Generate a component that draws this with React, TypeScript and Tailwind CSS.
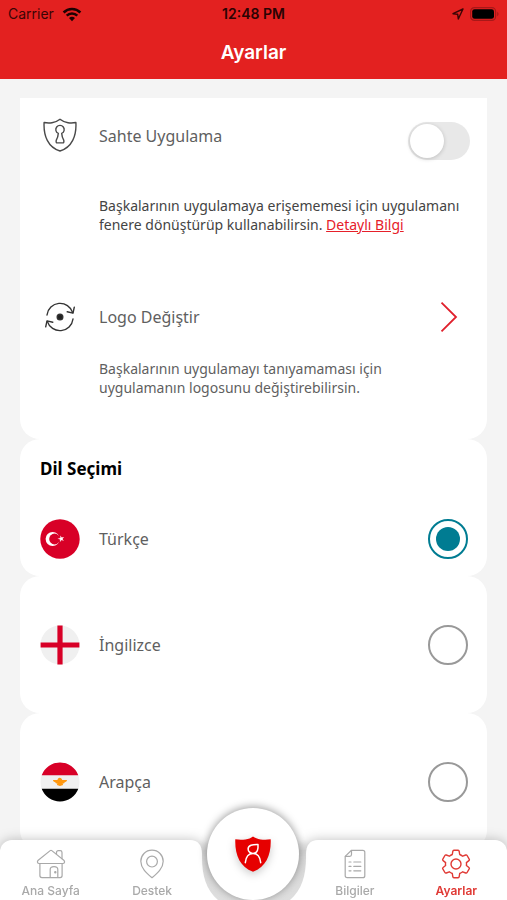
import { useState } from "react";
import type { ReactNode } from "react";

type Language = {
  code: string;
  name: string;
  flag: ReactNode;
};

const TurkeyFlag = () => (
  <svg viewBox="0 0 40 40" className="size-10" aria-hidden="true">
    <circle cx="20" cy="20" r="19.7" fill="#d80027" />
    <circle cx="12.6" cy="20" r="7" fill="#fff" />
    <circle cx="14.6" cy="20" r="5.4" fill="#d80027" />
    <path
      d="M20.400 16.600l1.300 2 2.300-.6-1.500 1.900 1.400 2-2.300-.8-1.500 1.900.1-2.400-2.700-.800 2.800-.7z"
      fill="#fff"
    />
  </svg>
);

const EnglandFlag = () => (
  <svg viewBox="0 0 40 40" className="size-10" aria-hidden="true">
    <circle cx="20" cy="20" r="19.5" fill="#f0f0f0" />
    <path
      d="M17.4.6h5.2v16.8h16.8v5.2H22.6v16.8h-5.2V22.6H.6v-5.2h16.8z"
      fill="#d80027"
    />
  </svg>
);

const EgyptFlag = () => (
  <svg viewBox="0 0 40 40" className="size-10" aria-hidden="true">
    <circle cx="20" cy="20" r="19.5" fill="#f0f0f0" />
    <path d="M20 .5A19.5 19.5 0 0 0 1.7 13.2h36.6A19.5 19.5 0 0 0 20 .5z" fill="#d80027" />
    <path d="M20 39.5A19.5 19.5 0 0 1 1.7 26.8h36.6A19.5 19.5 0 0 1 20 39.5z" fill="#000" />
    <path
      d="M13 18h4.500c.2-1.200 1-2.200 2-2.200 1.200 0 2.200.8 2.700 2.200H27c0 1.400-1.200 2.200-2.400 2.200 0 1-1 1.400-2 1.400l.5 1.500-3.100.8-3.100-.8.500-1.500c-1 0-2-.4-2-1.400-1.200 0-2.400-.8-2.400-2.200z"
      fill="#ff9811"
    />
  </svg>
);

const ShieldIcon = () => (
  <svg viewBox="0 0 34 34" className="size-[34px]" fill="none" stroke="#4a4a4a" strokeWidth="1.4" strokeLinejoin="round" aria-hidden="true">
    <path d="M17 1.200c-2 1.600-4.800 3-8 3.500-2.700.4-5.300.3-7.900-.2C.4 17.800 5 29.300 17 33 29 29.300 33.600 17.800 32.900 4.500c-2.600.5-5.200.6-7.900.2-3.200-.5-6-1.900-8-3.500z" />
    <path d="M15.300 15.400a4.200 4.200 0 1 1 3.400 0c.2 2.600.8 4.700 1.900 6.500.5.900.3 2.700-.3 3h-6.600c-.6-.3-.8-2.100-.3-3 1.100-1.800 1.700-3.900 1.900-6.500z" />
  </svg>
);

const SwapIcon = () => (
  <svg viewBox="0 0 32 32" className="size-8" fill="none" stroke="#333" strokeWidth="1.400" strokeLinecap="round" strokeLinejoin="round" aria-hidden="true">
    <path d="M3 14A13.200 13.200 0 0 1 28.700 11.600" />
    <path d="M23.200 10.800l5.800 1.300 1.300-6" />
    <path d="M29 18A13.200 13.200 0 0 1 3.300 20.400" />
    <path d="M8.800 21.200L3 19.900l-1.300 6" />
    <circle cx="16" cy="16" r="2.800" fill="#222" />
  </svg>
);

const HomeIcon = () => (
  <svg viewBox="0 0 30 30" className="size-[30px]" fill="none" stroke="currentColor" strokeWidth="1.200" strokeLinejoin="round" strokeLinecap="round" aria-hidden="true">
    <path d="M14.200 1.600c.5-.4 1.100-.4 1.600 0l12 9.600c1.400 1.200.8 3.300-1 3.300H3.200c-1.800 0-2.400-2.100-1-3.300z" />
    <path d="M20.500 5.200V3.400c0-1.100.7-1.800 1.800-1.800h1.900c1.100 0 1.800.7 1.800 1.800v6.200" />
    <path d="M3.900 14.600v12c0 1.300.7 2 2 2h18.200c1.300 0 2-.7 2-2v-12" />
    <path d="M14.200 28.500v-7.900c0-1.600 1.700-2.900 3.800-2.900s3.800 1.300 3.800 2.900v7.900" />
    <circle cx="19.300" cy="23.200" r=".6" fill="currentColor" />
  </svg>
);

const PinIcon = () => (
  <svg viewBox="0 0 30 30" className="size-[30px]" fill="none" stroke="currentColor" strokeWidth="1.200" strokeLinejoin="round" aria-hidden="true">
    <path d="M15 1.200C8.600 1.200 3.800 6.200 3.800 12.300c0 6.800 5.700 11.800 11.200 16.400 5.500-4.600 11.200-9.600 11.200-16.400C26.200 6.200 21.400 1.200 15 1.200z" />
    <circle cx="15" cy="12.600" r="5.400" />
  </svg>
);

const NotesIcon = () => (
  <svg viewBox="0 0 30 30" className="size-[30px]" fill="none" stroke="currentColor" strokeWidth="1.200" strokeLinejoin="round" strokeLinecap="round" aria-hidden="true">
    <path d="M11.500 1.300h11.300c1.400 0 2 .7 2 2v23.400c0 1.300-.6 2-2 2H7.200c-1.400 0-2-.7-2-2V7.400z" />
    <path d="M11.500 1.500v4.100c0 1.200-.6 1.800-1.800 1.800H5.400" />
    <path d="M9 13h2M13.800 13h7M9 17.400h2M13.800 17.400h7M9 21.800h2M13.800 21.800h7" />
  </svg>
);

const GearIcon = () => (
  <svg viewBox="0 0 30 30" className="size-[30px]" fill="none" stroke="currentColor" strokeWidth="1.400" strokeLinejoin="round" aria-hidden="true">
    <path d="M12.900 1.300h4.200c.6 0 1 .4 1.100 1l.5 3.200c1.100.4 2.100 1 3 1.700l3-1.200c.6-.2 1.100 0 1.400.5l2.100 3.700c.3.500.2 1.100-.3 1.400L25.400 13.600c.2 1 .2 1.900 0 2.900l2.500 2c.5.3.6.900.3 1.400l-2.100 3.600c-.3.500-.8.700-1.400.5l-3-1.200c-.9.700-1.900 1.300-3 1.700l-.5 3.200c-.1.600-.5 1-1.100 1h-4.200c-.6 0-1-.4-1.100-1l-.5-3.200c-1.100-.4-2.100-1-3-1.700l-3 1.200c-.6.2-1.100 0-1.400-.5l-2.100-3.600c-.3-.5-.2-1.100.3-1.400l2.500-2c-.2-1-.2-1.900 0-2.900l-2.500-2c-.5-.3-.6-.9-.3-1.400l2.100-3.700c.3-.5.8-.7 1.400-.5l3 1.200c.9-.7 1.900-1.300 3-1.700l.5-3.200c.1-.6.500-1 1.100-1z" />
    <circle cx="15" cy="15" r="5" />
  </svg>
);

const BadgeIcon = () => (
  <svg viewBox="0 0 36 36" className="size-9 drop-shadow-[0_3px_4px_rgba(0,0,0,0.2)]" aria-hidden="true">
    <path
      d="M18 .4c-2 1.400-4.500 2.600-7.600 3-3.400.5-6.600.4-10.100-.1C-.3 18 4.500 30.800 18 35.700 31.500 30.800 36.300 18 35.700 3.300c-3.500.5-6.700.6-10.100.1-3.100-.4-5.600-1.600-7.600-3z"
      fill="#e60000"
    />
    <path
      d="M23 8.500c.3 4.200-.2 8.900-5 8.900-2.700 0-4.900-1.900-4.900-4.500 0-3.900 4.500-4.500 9.900-4.400zM10.300 26.700c.6-5.600 3.400-9.100 7.700-9.100s7.100 3.500 7.700 9.100"
      fill="none"
      stroke="#fff"
      strokeWidth="1.500"
      strokeLinecap="round"
      strokeLinejoin="round"
    />
  </svg>
);

const languages: Language[] = [
  { code: "tr", name: "Türkçe", flag: <TurkeyFlag /> },
  { code: "en", name: "İngilizce", flag: <EnglandFlag /> },
  { code: "ar", name: "Arapça", flag: <EgyptFlag /> },
];

const StatusBar = () => (
  <div className="grid grid-cols-3 items-center h-7 px-2 text-sm text-[#3a0505]">
    <div className="flex items-center gap-2">
      <span>Carrier</span>
      <svg viewBox="0 0 20 15" className="w-5 h-[15px]" aria-hidden="true">
        <path d="M10 14.200l-3-3.100a4.300 4.300 0 0 1 6 0z" fill="#1c0202" />
        <path
          d="M4.700 8.700a7.600 7.600 0 0 1 10.600 0M1.600 5.500a12 12 0 0 1 16.800 0"
          fill="none"
          stroke="#1c0202"
          strokeWidth="2.500"
        />
      </svg>
    </div>
    <span className="text-center font-semibold whitespace-nowrap text-[#2a0303]">12:48 PM</span>
    <div className="flex items-center justify-end gap-1.5">
      <svg viewBox="0 0 12 12" className="size-3" aria-hidden="true">
        <path d="M11 1L1 5.700l4.700.6.600 4.700z" fill="none" stroke="#3a0505" strokeWidth="1.400" strokeLinejoin="round" />
      </svg>
      <svg viewBox="0 0 29 14" className="w-[29px] h-3.5" aria-hidden="true">
        <rect x=".6" y=".6" width="25" height="12.800" rx="3.800" fill="none" stroke="#a81818" strokeWidth="1.200" />
        <rect x="2.200" y="2.200" width="21.800" height="9.600" rx="2.400" fill="#000" />
        <path d="M27.200 4.800c1.800.8 1.800 3.600 0 4.400z" fill="#a81818" />
      </svg>
    </div>
  </div>
);

const LanguageRow = ({
  item,
  checked,
  onSelect,
}: {
  item: Language;
  checked: boolean;
  onSelect: (code: string) => void;
}) => (
  <label className="flex items-center cursor-pointer">
    {item.flag}
    <span className="ml-[19px] flex-1 text-base">{item.name}</span>
    <input
      type="radio"
      name="language"
      value={item.code}
      checked={checked}
      onChange={() => onSelect(item.code)}
      className="appearance-none size-10 rounded-full border-2 border-[#999999] bg-white grid place-items-center checked:border-[#007c92] checked:before:content-[''] checked:before:size-6 checked:before:rounded-full checked:before:bg-[#007c92]"
    />
  </label>
);

const tabClass = "flex flex-col items-center pt-[9px] text-xs font-medium";

const BottomNav = () => (
  <nav className="fixed inset-x-0 bottom-0 h-[60px] font-['Inter',sans-serif] text-[#a9a9a9]">
    {/* BACKGROUND WITH NOTCH */}
    <div className="absolute inset-0 flex drop-shadow-[0_0_6px_rgba(0,0,0,0.25)]">
      <div className="flex-1 bg-white rounded-tl-xl" />
      <svg viewBox="0 0 128 60" className="w-32 h-[60px]" aria-hidden="true">
        <defs>
          <linearGradient id="notch" x1="0" y1="0" x2="0" y2="1">
            <stop offset="0" stopColor="#d8d8d8" stopOpacity="0" />
            <stop offset="0.3" stopColor="#d8d8d8" />
            <stop offset="1" stopColor="#dedede" />
          </linearGradient>
        </defs>
        <path d="M0 0h128v60H0z" fill="url(#notch)" />
        <path d="M0 0c8 0 12 5 12 14v3c0 18 4 33 16 43H0z" fill="#fff" />
        <path d="M128 0c-8 0-12 5-12 14v3c0 18-4 33-16 43h28z" fill="#fff" />
      </svg>
      <div className="flex-1 bg-white rounded-tr-xl" />
    </div>
    {/* TABS */}
    <div className="relative grid grid-cols-5 h-full">
      <a href="#ana-sayfa" className={tabClass}>
        <HomeIcon />
        <span className="mt-1">Ana Sayfa</span>
      </a>
      <a href="#destek" className={tabClass}>
        <PinIcon />
        <span className="mt-1">Destek</span>
      </a>
      <div className="flex justify-center items-start">
        <button
          type="button"
          aria-label="Acil durum"
          className="shrink-0 -mt-8 flex items-center justify-center size-[92px] rounded-full bg-white shadow-[0_-1px_8px_rgba(0,0,0,0.4)]"
        >
          <BadgeIcon />
        </button>
      </div>
      <a href="#bilgiler" className={tabClass}>
        <NotesIcon />
        <span className="mt-1">Bilgiler</span>
      </a>
      <a href="#ayarlar" aria-current="page" className={`${tabClass} text-[#e03a35]`}>
        <GearIcon />
        <span className="mt-1 font-semibold">Ayarlar</span>
      </a>
    </div>
  </nav>
);

const App = () => {
  const [fakeApp, setFakeApp] = useState(false);
  const [language, setLanguage] = useState("tr");

  return (
    <div className="flex flex-col h-screen bg-[#f4f4f4] font-['Noto_Sans',sans-serif] text-[#5f5f5f]">
      {/* HEADER */}
      <header className="shrink-0 bg-[#e32120] font-['Inter',sans-serif] pb-3">
        <StatusBar />
        <h1 className="pt-[11px] text-center text-[19px] leading-7 font-semibold text-white">Ayarlar</h1>
      </header>

      {/* SETTINGS */}
      <main className="flex-1 overflow-y-auto [scrollbar-width:none] mt-[19px] px-5 pb-[60px]">
        <section className="bg-white rounded-b-[20px] h-[341px] pl-5 pr-[19px] pt-5">
          <div className="flex items-start">
            <div className="w-10 flex justify-center">
              <ShieldIcon />
            </div>
            <label htmlFor="fake-app" className="ml-[19px] flex-1 text-base leading-9">
              Sahte Uygulama
            </label>
            <input
              id="fake-app"
              type="checkbox"
              role="switch"
              checked={fakeApp}
              onChange={(e) => setFakeApp(e.target.checked)}
              className="appearance-none mt-1 -mr-0.5 flex items-center w-[62px] h-[38px] p-0.5 rounded-full bg-[#e8e8e8] checked:bg-[#007c92] checked:justify-end before:content-[''] before:size-[34px] before:rounded-full before:bg-white before:shadow-[0_1px_4px_rgba(0,0,0,0.18)]"
            />
          </div>
          <p className="mt-9 ml-[59px] text-sm leading-[19px] text-[#444444]">
            Başkalarının uygulamaya erişememesi için uygulamanı fenere dönüştürüp kullanabilirsin.{" "}
            <a href="#detayli-bilgi" className="inline-block text-[#e6202a] underline">
              Detaylı Bilgi
            </a>
          </p>

          <button type="button" className="mt-[65px] w-full flex items-center text-left">
            <span className="w-10 flex justify-center">
              <SwapIcon />
            </span>
            <span className="ml-[19px] flex-1 text-base leading-9">Logo Değiştir</span>
            <svg viewBox="0 0 18 32" className="w-[18px] h-8 mr-2.5" fill="none" stroke="#e0202c" strokeWidth="1.800" aria-hidden="true">
              <path d="M1.500 1.700L16 16 1.500 30.300" />
            </svg>
          </button>
          <p className="mt-6 ml-[59px] max-w-80 text-sm leading-[19px]">
            Başkalarının uygulamayı tanıyamaması için uygulamanın logosunu değiştirebilirsin.
          </p>
        </section>

        {/* LANGUAGES */}
        <section className="h-[137px] pl-5 pr-[19px] pt-[18px] bg-white rounded-[20px]">
          <h2 className="mb-[38px] text-[17px] leading-6 font-bold text-black">Dil Seçimi</h2>
          <LanguageRow
            item={languages[0]}
            checked={language === languages[0].code}
            onSelect={setLanguage}
          />
        </section>
        {languages.slice(1).map((item) => (
          <section
            key={item.code}
            className="flex flex-col justify-center h-[137px] pl-5 pr-[19px] bg-white rounded-[20px]"
          >
            <LanguageRow
              item={item}
              checked={language === item.code}
              onSelect={setLanguage}
            />
          </section>
        ))}
      </main>

      <BottomNav />
    </div>
  );
};

export default App;
